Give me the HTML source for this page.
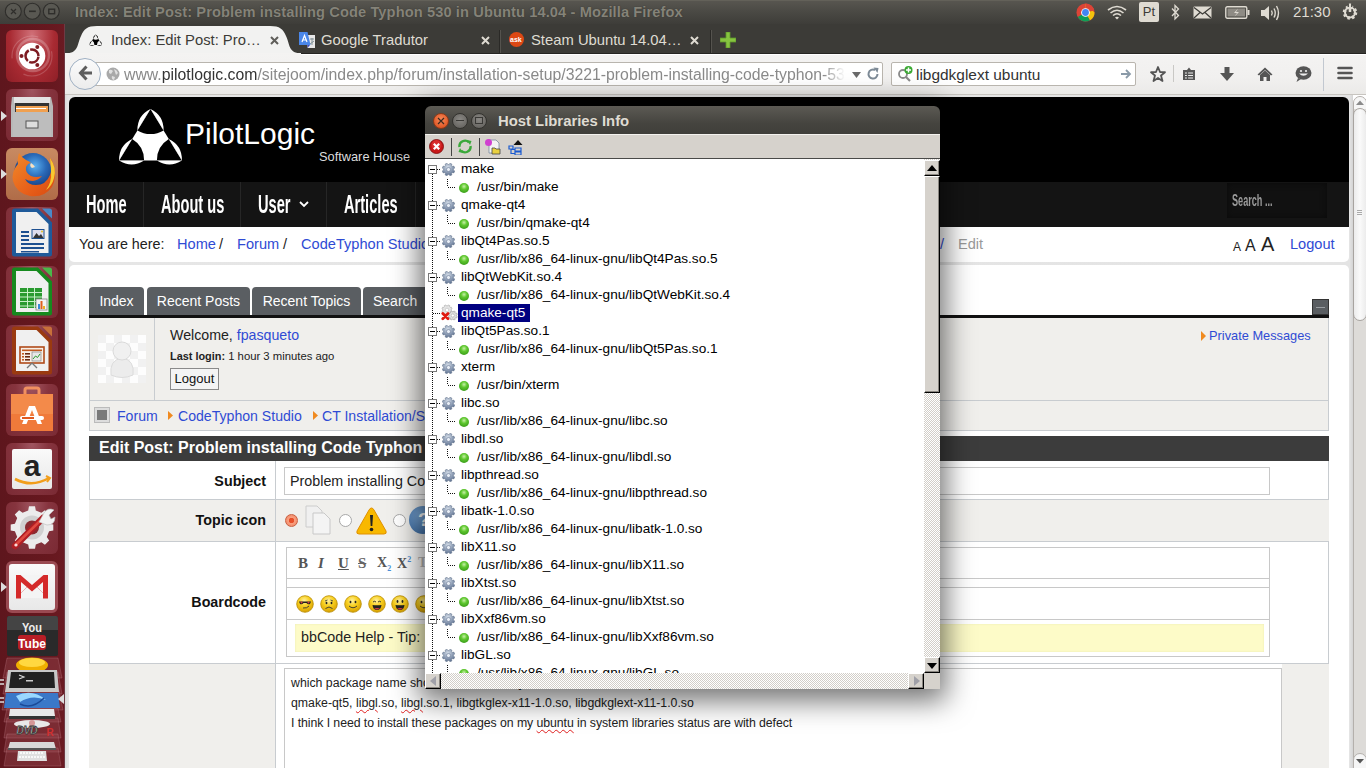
<!DOCTYPE html>
<html><head><meta charset="utf-8">
<style>
*{margin:0;padding:0;box-sizing:border-box}
html,body{width:1366px;height:768px;overflow:hidden;background:#fff;font-family:"Liberation Sans",sans-serif}
.a{position:absolute}
#panel{left:0;top:0;width:1366px;height:24px;background:linear-gradient(#69675e 0,#57554f 1.5px,#4a4944 50%,#3e3d39)}
#title{left:75px;top:4px;font-size:14.65px;font-weight:bold;color:#858379;text-shadow:0 0 1px #2e2d2a;white-space:nowrap;letter-spacing:0.1px}
.wb{width:16px;height:16px;border-radius:50%;border:1px solid #2f2e2b;background:linear-gradient(#5f5d58,#4a4944)}
#launcher{left:0;top:24px;width:65px;height:744px;background:linear-gradient(90deg,#5e161d,#67181f 80%,#6a1a22);border-right:1px solid #6e3a44}
.tile{left:6px;width:52px;height:52px;border-radius:6px}
#tabbar{left:65px;top:24px;width:1301px;height:30px;background:#3c3b37}
#toolbar{left:65px;top:53px;width:1301px;height:42px;background:linear-gradient(#f4f3f2,#f1f0ef 60%,#ebeae8);border-bottom:1px solid #c8c5c0}
#content{left:65px;top:95px;width:1288px;height:673px;background:linear-gradient(90deg,#dadada,#e6e6e6 3px,#e4e4e4)}
.tabt{font-size:14.8px;white-space:nowrap}
.tabx{font-size:11px;line-height:14px}
.url{font-size:15.8px;white-space:nowrap}
.nav{font-size:25px;font-weight:bold;color:#fff;white-space:nowrap;transform:scaleX(0.585);transform-origin:0 0}
.w15{font-size:14.6px;white-space:nowrap}
.ftab{top:287px;height:28px;background:#5a5e62;border-radius:4px 4px 0 0;color:#fff;font-size:14px;line-height:28px;text-align:center;white-space:nowrap}
.lbl{left:89px;width:177px;text-align:right;font-size:14.3px;font-weight:bold;color:#111;white-space:nowrap}
.ta{left:291px;font-size:12.3px;color:#222;white-space:nowrap}
.sp{text-decoration:underline wavy #e02020;text-decoration-thickness:1px;text-underline-offset:2px}
.wbtn{width:16px;height:16px;border-radius:50%;border:1px solid}
.exb{width:9px;height:9px;border:1px solid #7a7a7a;background:#fff}
.exb::after{content:"";position:absolute;left:1px;top:3px;width:5px;height:1px;background:#000}
.tt{font-size:13.62px;color:#000;white-space:nowrap;line-height:16px;margin-top:2.5px}
.ball{width:10px;height:10px;border-radius:50%;background:radial-gradient(circle at 50% 35%,#c8f0a8 0,#60c830 35%,#2a8a10 100%)}
.dith{background:repeating-conic-gradient(#ffffff 0 25%,#d2cec8 0 50%) 0 0/2px 2px}
.sbtn{background:#d6d2cc;border-top:1px solid #fff;border-left:1px solid #fff;border-right:1px solid #000;border-bottom:1px solid #000;box-shadow:inset -1px -1px 0 #8a8680}
</style></head><body>
<div id="panel" class="a">
  <svg class="a" style="left:0;top:0" width="64" height="24">
    <g fill="#595852" stroke="#2f2e2b" stroke-width="1.1">
      <circle cx="13.3" cy="11.2" r="8"/><circle cx="32.3" cy="11.2" r="8"/><circle cx="51.3" cy="11.2" r="8"/>
    </g>
    <path d="M11 9 L16 14 M16 9 L11 14" stroke="#2f2e2b" stroke-width="1.2"/>
    <path d="M29 11.3 H35.8" stroke="#2f2e2b" stroke-width="1.6"/>
    <rect x="48.8" y="9.2" width="5.8" height="4.5" fill="none" stroke="#2f2e2b" stroke-width="1.4"/>
  </svg>
  <div id="title" class="a">Index: Edit Post: Problem installing Code Typhon 530 in Ubuntu 14.04 - Mozilla Firefox</div>
  <svg class="a" style="left:1076px;top:3px" width="19" height="19" viewBox="0 0 20 20"><circle cx="10" cy="10" r="9.5" fill="#db4437"/><path d="M10 10 L1.8 14.8 A9.5 9.5 0 0 0 14.8 18.2 Z" fill="#0f9d58"/><path d="M10 10 L14.8 18.2 A9.5 9.5 0 0 0 19.5 10 L10 1 Z" fill="#f4c20d"/><path d="M10 10 L10 0.5 A9.5 9.5 0 0 1 19.3 8 Z" fill="#db4437"/><circle cx="10" cy="10" r="4.6" fill="#fff"/><circle cx="10" cy="10" r="3.6" fill="#4285f4"/></svg>
  <svg class="a" style="left:1107px;top:5px" width="20" height="15" viewBox="0 0 20 15"><path d="M1 5 Q10 -2 19 5 M3.5 8 Q10 2.5 16.5 8 M6 10.5 Q10 7 14 10.5" fill="none" stroke="#dfdbd2" stroke-width="1.6"/><path d="M8 12.5 L10 14.5 L12 12.5 Q10 11 8 12.5 Z" fill="#dfdbd2"/></svg>
  <div class="a" style="left:1139px;top:2px;width:20px;height:20px;background:#dfdbd2;border-radius:2px;font-size:13px;color:#3c3b37;text-align:center;line-height:20px">Pt</div>
  <svg class="a" style="left:1171px;top:4px" width="9" height="17" viewBox="0 0 9 17"><path d="M1 4.5 L7.5 11.5 L4 15 V1.5 L7.5 5 L1 12" fill="none" stroke="#dfdbd2" stroke-width="1.3"/></svg>
  <svg class="a" style="left:1193px;top:6px" width="19" height="13" viewBox="0 0 19 13"><rect x="0.5" y="0.5" width="18" height="12" fill="#dfdbd2" rx="1"/><path d="M1 1.5 L9.5 8 L18 1.5 M1 12 L7 6.5 M18 12 L12 6.5" fill="none" stroke="#3c3b37" stroke-width="1.2"/></svg>
  <svg class="a" style="left:1225px;top:6px" width="25" height="13" viewBox="0 0 25 13"><rect x="0.8" y="0.8" width="21" height="11.4" rx="1.5" fill="none" stroke="#dfdbd2" stroke-width="1.4"/><rect x="2.5" y="2.5" width="17.6" height="8" fill="#8e8b84"/><rect x="22.5" y="4" width="2" height="5" fill="#dfdbd2"/><path d="M13 2.5 L9 7 L12 7 L9.5 10.5 L14 6 L11 6 Z" fill="#dfdbd2"/></svg>
  <svg class="a" style="left:1260px;top:4px" width="22" height="18" viewBox="0 0 22 18"><path d="M1 6 H4.5 L9 2 V16 L4.5 12 H1 Z" fill="#dfdbd2"/><path d="M11.5 6.5 Q13 9 11.5 11.5 M14 4.5 Q16.5 9 14 13.5 M16.5 2 Q20.5 9 16.5 16" fill="none" stroke="#dfdbd2" stroke-width="1.4"/></svg>
  <div class="a" style="left:1293px;top:3px;font-size:15px;color:#dfdbd2">21:30</div>
  <svg class="a" style="left:1341px;top:3px" width="18" height="18" viewBox="0 0 18 18"><circle cx="9" cy="9.5" r="5.5" fill="none" stroke="#dfdbd2" stroke-width="3.5" stroke-dasharray="2.2 2.1"/><circle cx="9" cy="9.5" r="5" fill="none" stroke="#dfdbd2" stroke-width="2"/><rect x="7.8" y="1" width="2.4" height="8" fill="#dfdbd2"/><rect x="6.6" y="1" width="4.8" height="3" fill="#45443f"/><rect x="7.9" y="0.5" width="2.2" height="8" fill="#dfdbd2"/></svg>
</div>
<div id="launcher" class="a"></div>
<div id="lnch">
<div class="a tile" style="top:30px;background:radial-gradient(ellipse at 50% 10%,#d07078,#a82a32 60%,#8e1f27);"><svg width="52" height="52" viewBox="0 0 52 52"><circle cx="26" cy="26" r="20" fill="none" stroke="rgba(255,255,255,0.18)" stroke-width="1.2" stroke-dasharray="40 20"/><circle cx="27" cy="25" r="16" fill="none" stroke="rgba(255,255,255,0.22)" stroke-width="2.5"/><circle cx="26" cy="26" r="13.3" fill="#fff"/><circle cx="26" cy="26" r="6.5" fill="none" stroke="#7e1c22" stroke-width="2.5" stroke-dasharray="12.1 1.5" stroke-dashoffset="-0.75"/><circle cx="31.3" cy="16.9" r="2" fill="#7e1c22"/><circle cx="31.3" cy="35.1" r="2" fill="#7e1c22"/><circle cx="15.5" cy="26" r="2" fill="#7e1c22"/></svg></div>
<div class="a tile" style="top:89px;background:radial-gradient(ellipse at 50% 0%,#a05560 0%,#86343e 45%,#7a2a34 100%);"><svg width="52" height="52" viewBox="0 0 52 52"><path d="M6 8 H45 L47 17 V48 H5 V17 Z" fill="#b8b8b8"/><rect x="8" y="8" width="36" height="6" fill="#e4e4e4"/><rect x="9" y="14" width="34" height="9" fill="#333"/><rect x="10" y="17" width="32" height="6" fill="#f0a050"/><rect x="10" y="19" width="30" height="1" fill="#fff"/><rect x="7" y="23" width="38" height="25" fill="#bdbdbd"/><rect x="20" y="32" width="12" height="7" fill="#ddd" stroke="#555" stroke-width="1"/></svg></div>
<div class="a tile" style="top:148px;background:linear-gradient(#c88a62,#b06c48)"><svg width="52" height="52" viewBox="0 0 52 52">
<defs><radialGradient id="ffg" cx="0.55" cy="0.35" r="0.6"><stop offset="0" stop-color="#5ab0f0"/><stop offset="0.5" stop-color="#2a6ab8"/><stop offset="1" stop-color="#173c80"/></radialGradient>
<linearGradient id="ffo" x1="0" y1="0" x2="1" y2="1"><stop offset="0" stop-color="#f08a2a"/><stop offset="0.6" stop-color="#e8601a"/><stop offset="1" stop-color="#d84a10"/></linearGradient></defs>
<circle cx="27" cy="23.5" r="18.5" fill="url(#ffg)"/>
<path d="M13 5 Q11 12 12 16 Q5 24 7 33 Q10 45 24 48 Q38 50 46 39 Q51 30 48 18 Q46 12 44 10 Q47 20 44 27 Q40 37 30 37 Q22 37 19 31 Q22 33 27 33 Q33 32 36 28 Q30 30 25 28 Q19 25 20 19 Q22 15 25 15 Q23 13 20 12 Q16 10 13 5 Z" fill="url(#ffo)"/>
<path d="M44 10 Q51 20 48 30 Q46 38 40 42 Q46 34 45 24 Q45 16 44 10 Z" fill="#f8c830"/>
<path d="M25 15 Q28 17 29 19 L26 20 Q23 18 25 15 Z" fill="#f8e0c0"/>
</svg></div>
<div class="a tile" style="top:207px;background:radial-gradient(ellipse at 50% 0%,#a05560 0%,#86343e 45%,#7a2a34 100%);"><svg width="52" height="52" viewBox="0 0 52 52"><path d="M8 1.5 H32 L46 15.5 V47 Q46 49.5 43.5 49.5 H8.5 Q6 49.5 6 47 V4 Q6 1.5 8.5 1.5 Z" fill="#1f5a9a"/><path d="M10 5 H30.5 L42.5 17 V46 H10 Z" fill="#f0f0f0"/><path d="M36 1.5 H43.5 Q46 1.5 46 4 V11.5 Z" fill="#4a8ac8"/><rect x="15" y="24" width="8" height="2" fill="#1e5090"/><rect x="15" y="28" width="8" height="2" fill="#1e5090"/><rect x="15" y="32" width="8" height="2" fill="#1e5090"/><rect x="15" y="36" width="23" height="2" fill="#1e5090"/><rect x="15" y="40" width="23" height="2" fill="#1e5090"/><rect x="15" y="44" width="18" height="1.5" fill="#1e5090"/><rect x="25.5" y="22" width="13" height="10" fill="#1e5090"/><rect x="26.5" y="23" width="11" height="8" fill="#dde"/><path d="M27 31 L30.5 26 L33 29 L35 27 L37.5 31 Z" fill="#333"/><circle cx="36" cy="24.5" r="1" fill="#e8c020"/></svg></div>
<div class="a tile" style="top:266px;background:radial-gradient(ellipse at 50% 0%,#a05560 0%,#86343e 45%,#7a2a34 100%);"><svg width="52" height="52" viewBox="0 0 52 52"><path d="M8 1.5 H32 L46 15.5 V47 Q46 49.5 43.5 49.5 H8.5 Q6 49.5 6 47 V4 Q6 1.5 8.5 1.5 Z" fill="#168a1e"/><path d="M10 5 H30.5 L42.5 17 V46 H10 Z" fill="#f0f0f0"/><path d="M36 1.5 H43.5 Q46 1.5 46 4 V11.5 Z" fill="#4ab84a"/><rect x="14" y="22" width="22" height="20" fill="#2a9a30"/><path d="M14 26.5 H36 M14 31 H36 M14 35.5 H36 M14 40 H36 M21.5 22 V42 M28.5 22 V42" stroke="#c8f0c8" stroke-width="1"/><rect x="30" y="33" width="11" height="11" fill="#f4f4f4" stroke="#888" stroke-width="0.8"/><rect x="32" y="38" width="2" height="5" fill="#3a8ad8"/><rect x="34.5" y="35" width="2" height="8" fill="#e06020"/><rect x="37" y="40" width="2" height="3" fill="#f0b020"/></svg></div>
<div class="a tile" style="top:325px;background:radial-gradient(ellipse at 50% 0%,#a05560 0%,#86343e 45%,#7a2a34 100%);"><svg width="52" height="52" viewBox="0 0 52 52"><path d="M8 1.5 H32 L46 15.5 V47 Q46 49.5 43.5 49.5 H8.5 Q6 49.5 6 47 V4 Q6 1.5 8.5 1.5 Z" fill="#9a3a10"/><path d="M10 5 H30.5 L42.5 17 V46 H10 Z" fill="#f0f0f0"/><path d="M36 1.5 H43.5 Q46 1.5 46 4 V11.5 Z" fill="#c8703a"/><rect x="14" y="22" width="24" height="16" fill="#f8f0e8" stroke="#b04a1a" stroke-width="1.6"/><rect x="16" y="24.5" width="20" height="1.6" fill="#c05a20"/><rect x="16" y="28" width="2" height="1.6" fill="#c05a20"/><rect x="19" y="28" width="5" height="1.6" fill="#6a2a10"/><rect x="16" y="31" width="2" height="1.6" fill="#c05a20"/><rect x="19" y="31" width="5" height="1.6" fill="#6a2a10"/><rect x="16" y="34" width="2" height="1.6" fill="#c05a20"/><rect x="19" y="34" width="5" height="1.6" fill="#6a2a10"/><rect x="26" y="27" width="9" height="9" fill="#e8e8e8" stroke="#777" stroke-width="0.6"/><path d="M27 34 L29.5 31 L31.5 32.5 L34 29" fill="none" stroke="#2a9a2a" stroke-width="1"/><path d="M26 38 L21 43 M26 38 L31 43" stroke="#777" stroke-width="1.4"/></svg></div>
<div class="a tile" style="top:384px;background:radial-gradient(ellipse at 50% 0%,#a05560 0%,#86343e 45%,#7a2a34 100%)"><svg width="52" height="52" viewBox="0 0 52 52"><path d="M19 10 V6 Q19 4 21 4 H31 Q33 4 33 6 V10" fill="none" stroke="#f09060" stroke-width="3"/><path d="M5 10 H47 V47 H5 Z" fill="#f07a3a"/><path d="M5 10 H47 V30 H5 Z" fill="#f38a4a"/><path d="M23 22 H29 L36 40 H31.5 L26 26 L20.5 40 H16 Z" fill="#fff"/><rect x="14" y="32" width="24" height="4" rx="2" fill="#fff"/><rect x="16" y="33" width="12" height="2" fill="#e05a20"/></svg></div>
<div class="a tile" style="top:443px;background:radial-gradient(ellipse at 50% 0%,#a05560 0%,#86343e 45%,#7a2a34 100%)"><div class="a" style="left:6px;top:6px;width:40px;height:40px;border-radius:2px;background:linear-gradient(#fafafa,#e8e8e8)"></div><svg class="a" style="left:0;top:0" width="52" height="52" viewBox="0 0 52 52"><text x="26" y="33" text-anchor="middle" font-family="Liberation Sans" font-weight="bold" font-size="30" fill="#222">a</text><path d="M9 36 Q26 45 43 35" fill="none" stroke="#f19e1c" stroke-width="2.6"/><path d="M40 33 L44 35 L41 39" fill="none" stroke="#f19e1c" stroke-width="2"/></svg></div>
<div class="a tile" style="top:502px;background:radial-gradient(ellipse at 50% 0%,#a05560 0%,#86343e 45%,#7a2a34 100%)"><svg width="52" height="52" viewBox="0 0 52 52"><path d="M43.1 21.7 L47.3 22.5 L47.3 28.5 L43.1 29.3 L40.8 34.9 L43.2 38.4 L38.9 42.7 L35.4 40.3 L29.8 42.6 L29.0 46.8 L23.0 46.8 L22.2 42.6 L16.6 40.3 L13.1 42.7 L8.8 38.4 L11.2 34.9 L8.9 29.3 L4.7 28.5 L4.7 22.5 L8.9 21.7 L11.2 16.1 L8.8 12.6 L13.1 8.3 L16.6 10.7 L22.2 8.4 L23.0 4.2 L29.0 4.2 L29.8 8.4 L35.4 10.7 L38.9 8.3 L43.2 12.6 L40.8 16.1 Z" fill="#ececec"/><circle cx="26" cy="25.5" r="12" fill="#d0d0d0"/><circle cx="26" cy="25.5" r="7" fill="#8a2a30"/><path d="M9 44 L37 16" stroke="#b01e24" stroke-width="6.5" stroke-linecap="round"/><path d="M9.5 43 L36 17" stroke="#e04a40" stroke-width="2.5" stroke-linecap="round"/><circle cx="10" cy="43" r="1.6" fill="#fff" opacity="0.8"/><path d="M33 20 L38 11 Q42 5 48 8 L43 13 L45 17 L49 15 Q49 23 41 23 Z" fill="#f2f2f2" stroke="#bbb" stroke-width="0.6"/></svg></div>
<div class="a tile" style="top:561px;background:linear-gradient(#fafafa,#e8e8e8);border:3px solid #9a4a52"><svg class="a" style="left:-3px;top:-3px" width="52" height="52" viewBox="0 0 52 52"><path d="M10 14 H42 V37 H10 Z" fill="#f4f4f4"/><path d="M10 37 L21 26 M42 37 L31 26" stroke="#e8a0a0" stroke-width="0.8"/><path d="M10 14 H14.5 L26 24 L37.5 14 H42 V37.5 H37 V21 L26 30.5 L15 21 V37.5 H10 Z" fill="#d42a2a"/></svg></div>
<div class="a" style="left:1px;top:111px;width:0;height:0;border-top:5px solid transparent;border-bottom:5px solid transparent;border-left:6px solid #ddd"></div>
<div class="a" style="left:1px;top:169px;width:0;height:0;border-top:5px solid transparent;border-bottom:5px solid transparent;border-left:6px solid #ddd"></div>
<div class="a" style="left:1px;top:582px;width:0;height:0;border-top:5px solid transparent;border-bottom:5px solid transparent;border-left:6px solid #ddd"></div>
<svg class="a" style="left:0;top:610px" width="65" height="158" viewBox="0 0 65 158">
 <g fill="rgba(160,80,90,0.35)" stroke="rgba(200,140,150,0.35)" stroke-width="0.8">
  <path d="M7 48 H58 L62 68 H3 Z"/><path d="M7 62 H58 L62 84 H3 Z"/><path d="M6 80 H59 L63 100 H2 Z"/>
  <path d="M7 98 H58 L61 112 H4 Z"/><path d="M7 108 H58 L61 128 H4 Z"/><path d="M7 124 H58 L61 142 H4 Z"/><path d="M7 138 H58 L61 156 H4 Z"/>
 </g>
 <path d="M9 6 H56 Q58 6 58 9 V44 Q58 46 55 46 H10 Q7 46 7 44 V9 Q7 6 9 6 Z" fill="#2a2a2a"/>
 <path d="M9 6 H56 Q58 6 58 9 V20 H7 V9 Q7 6 9 6 Z" fill="#444"/>
 <text x="32" y="22" text-anchor="middle" font-family="Liberation Sans" font-weight="bold" font-size="11" fill="#eee" transform="scale(1,1.15) translate(0,-2.5)">You</text>
 <rect x="18" y="25" width="28" height="15" rx="3" fill="#b81e26"/><text x="32" y="37.5" text-anchor="middle" font-family="Liberation Sans" font-weight="bold" font-size="12" fill="#fff">Tube</text>
 <ellipse cx="32" cy="55" rx="16" ry="7.5" fill="#f0b000"/><ellipse cx="32" cy="52.5" rx="13" ry="4.5" fill="#ffd840"/>
 <path d="M8 60 H57 L59 82 H5 Z" fill="#c8c8c8"/><path d="M11 62 H54 L55 78 H9 Z" fill="#222"/><path d="M19 65 L24 67 L19 69" stroke="#ddd" fill="none" stroke-width="1.1"/><rect x="26" y="70" width="7" height="1.5" fill="#ccc"/>
 <path d="M6 83 H58 L60 98 H4 Z" fill="#3a78c8"/><path d="M16 86 Q32 78 46 90 Q32 84 20 92 Z" fill="#9ad8ff"/><path d="M20 94 Q32 100 44 88" fill="none" stroke="#1a4a98" stroke-width="1.5"/>
 <path d="M10 99 H54 L55 106 H9 Z" fill="#e8e8e8"/><rect x="9" y="106" width="46" height="3" fill="#333"/>
 <ellipse cx="32" cy="114" rx="18" ry="4" fill="#e8e8e8"/><circle cx="32" cy="113" r="3" fill="#c86060" opacity="0.6"/>
 <text x="27" y="124" text-anchor="middle" font-family="Liberation Sans" font-style="italic" font-weight="bold" font-size="10" fill="#fff" stroke="#333" stroke-width="0.8">DVD</text><text x="50" y="126" text-anchor="middle" font-family="Liberation Sans" font-weight="bold" font-size="10" fill="#d03030">R</text>
 <path d="M10 132 H54 L56 139 H8 Z" fill="#d8d8d8"/><rect x="8" y="138" width="48" height="2" fill="#555"/>
 <path d="M18 141 H46 L47 151 H17 Z" fill="#e0e0e0"/><path d="M20 143 H44 M19 147 H45" stroke="#fff" stroke-width="1.5" stroke-dasharray="2 1"/>
 <path d="M0 70 H4 M0 74 H4 M0 88 H4 M0 92 H4" stroke="#ddd" stroke-width="1.6"/>
 <path d="M64 84 L58 89 L64 94 Z" fill="#ddd"/>
</svg>
</div>
<div id="tabbar" class="a">
  <svg class="a" style="left:0;top:0" width="1301" height="30">
    <path d="M0 29.5 C 14 29.5, 12 20, 16 12 C 19 5, 22 2, 32 2 L 205 2 C 215 2, 218 5, 221 12 C 225 20, 223 29.5, 237 29.5 Z" fill="#f2f2f1"/>
    <line x1="434.5" y1="6" x2="434.5" y2="29" stroke="#2a2926" stroke-width="1"/>
    <line x1="435.5" y1="6" x2="435.5" y2="29" stroke="#55534e" stroke-width="1"/>
    <line x1="645.5" y1="6" x2="645.5" y2="29" stroke="#2a2926" stroke-width="1"/>
    <line x1="646.5" y1="6" x2="646.5" y2="29" stroke="#55534e" stroke-width="1"/>
  </svg>
</div>
<div id="tabs">
  <svg class="a" style="left:88px;top:33px" width="16" height="14" viewBox="0 0 80 68"><path d="M38.5 7.1 L7.1 58.4 L69.9 58.4 Z" fill="#000"/><path d="M38.5 7.1 L25.4 28.4 A25 25 0 0 0 51.6 28.4 Z M7.1 58.4 L20.2 37.1 A25 25 0 0 1 32.1 58.4 Z M69.9 58.4 L56.8 37.1 A25 25 0 0 0 44.9 58.4 Z" fill="#f2f2f1"/><path d="M38.5 7.1 Q25.2 13.6 25.4 28.4 Z M38.5 7.1 Q51.8 13.6 51.6 28.4 Z M7.1 58.4 Q6.8 43.6 20.2 37.1 Z M7.1 58.4 Q19.6 66.4 32.1 58.4 Z M69.9 58.4 Q70.2 43.6 56.8 37.1 Z M69.9 58.4 Q57.4 66.4 44.9 58.4 Z" fill="#000"/></svg>
  <div class="a tabt" style="left:111px;top:32px;color:#3c3b37">Index: Edit Post: Pro…</div>
  <svg class="a" style="left:270px;top:36px" width="9" height="9"><path d="M1 1 L8 8 M8 1 L1 8" stroke="#5f5e5a" stroke-width="2"/></svg>
  <svg class="a" style="left:298px;top:32px" width="18" height="17" viewBox="0 0 18 17"><rect x="9.5" y="3" width="7.5" height="13" fill="#e8e8e8"/><path d="M12 7 H16 M14 6 V13 M12 12 L16 9" stroke="#7a8a90" stroke-width="0.9"/><path d="M9.5 13 H12 L9.5 16 Z" fill="#3a4ac0"/><path d="M1 0 H9.5 L12.5 13 H1 Z" fill="#4a86e8"/><path d="M4 10 L6.5 3.5 L9 10 M5 8 H8" fill="none" stroke="#fff" stroke-width="1.2"/></svg>
  <div class="a tabt" style="left:321px;top:32px;color:#dfdbd2">Google Tradutor</div>
  <svg class="a" style="left:481px;top:36px" width="9" height="9"><path d="M1 1 L8 8 M8 1 L1 8" stroke="#dfdbd2" stroke-width="2"/></svg>
  <div class="a" style="left:509px;top:32px;width:15px;height:15px;background:#dd4814;border-radius:50%"></div>
  <div class="a" style="left:510px;top:36px;font-size:7px;color:#fff;font-weight:bold">ask</div>
  <div class="a tabt" style="left:531px;top:32px;color:#dfdbd2">Steam Ubuntu 14.04…</div>
  <svg class="a" style="left:690px;top:36px" width="9" height="9"><path d="M1 1 L8 8 M8 1 L1 8" stroke="#dfdbd2" stroke-width="2"/></svg>
  <svg class="a" style="left:720px;top:32px" width="16" height="16"><path d="M6 0 H10 V6 H16 V10 H10 V16 H6 V10 H0 V6 H6 Z" fill="#86c440" stroke="#5e9a2a" stroke-width="0.8"/></svg>
</div>
<div id="toolbar" class="a"></div>
<div id="tb">
  <div class="a" style="left:301px;top:53px;width:1065px;height:1px;background:#262522"></div>
  <div class="a" style="left:301px;top:54px;width:1065px;height:1px;background:#fff"></div>
  <div class="a" style="left:90px;top:62px;width:793px;height:24px;background:#fff;border:1px solid #b9b5ae;border-radius:2px"></div>
  <div class="a" style="left:69px;top:58px;width:32px;height:32px;border-radius:50%;border:1px solid #9fb0c3;background:linear-gradient(#fbfbfb,#ececec)"></div>
  <svg class="a" style="left:78px;top:65px" width="16" height="16" viewBox="0 0 16 16"><path d="M8.5 1.5 L2.5 8 L8.5 14.5 M3 8 H14" fill="none" stroke="#5d5d5d" stroke-width="3" stroke-linejoin="miter"/></svg>
  <svg class="a" style="left:106px;top:67px" width="14" height="14" viewBox="0 0 14 14"><circle cx="7" cy="7" r="6.5" fill="#a9a9a9"/><path d="M3 3 Q5 2 7 4 L5 7 L3 6 Z M8 2 Q11 3 12 6 L10 8 L9 5 Z M6 9 L9 10 L8 13 Q5 12 6 9 Z" fill="#e0e0e0"/></svg>
  <div class="a url" style="left:124px;top:66px;width:721px;overflow:hidden;-webkit-mask-image:linear-gradient(90deg,#000 97%,transparent)"><span style="color:#8a8a8a">www.</span><span style="color:#333">pilotlogic.com</span><span style="color:#8a8a8a">/sitejoom/index.php/forum/installation-setup/3221-problem-installing-code-typhon-53(</span></div>
  <svg class="a" style="left:852px;top:72px" width="9" height="6"><path d="M0 0 H9 L4.5 6 Z" fill="#6a6a6a"/></svg>
  <svg class="a" style="left:866px;top:67px" width="14" height="14" viewBox="0 0 14 14"><path d="M11.5 7 A4.5 4.5 0 1 1 9 3" fill="none" stroke="#7d8a96" stroke-width="2"/><path d="M7.5 0.5 L12.5 1 L11.5 6 Z" fill="#7d8a96"/></svg>
  <div class="a" style="left:891px;top:62px;width:245px;height:24px;background:#fff;border:1px solid #b9b5ae;border-radius:2px"></div>
  <svg class="a" style="left:897px;top:65px" width="18" height="18" viewBox="0 0 18 18"><circle cx="6" cy="9" r="4" fill="none" stroke="#8a8a8a" stroke-width="1.8"/><path d="M9 12 L13 16" stroke="#8a8a8a" stroke-width="2.2"/><circle cx="11.5" cy="5" r="4" fill="#3aa832"/><path d="M11.5 2.5 V7.5 M9 5 H14" stroke="#fff" stroke-width="1.5"/></svg>
  <div class="a url" style="left:916px;top:66px;color:#333;font-size:15.45px">libgdkglext ubuntu</div>
  <svg class="a" style="left:1120px;top:68px" width="12" height="12" viewBox="0 0 12 12"><path d="M1 6 H10 M6 2 L10 6 L6 10" fill="none" stroke="#8a9aa8" stroke-width="1.8"/></svg>
  <svg class="a" style="left:1150px;top:66px" width="16" height="16" viewBox="0 0 16 16"><path d="M8 1 L10 6 L15 6.2 L11 9.5 L12.5 15 L8 12 L3.5 15 L5 9.5 L1 6.2 L6 6 Z" fill="none" stroke="#555" stroke-width="1.8" stroke-linejoin="round"/></svg>
  <div class="a" style="left:1173px;top:65px;width:1px;height:17px;background:#c9c8c5"></div>
  <svg class="a" style="left:1182px;top:66px" width="14" height="15" viewBox="0 0 14 15"><path d="M1 4 H5 L7 1.5 L9 4 H13 V14 H1 Z" fill="#555"/><path d="M3 7 H11 M3 9.5 H11 M3 12 H11" stroke="#eee" stroke-width="1.2"/><path d="M5.5 6 V13" stroke="#555" stroke-width="1.2"/></svg>
  <svg class="a" style="left:1220px;top:67px" width="14" height="14" viewBox="0 0 14 14"><path d="M4.5 0 H9.5 V6 H14 L7 14 L0 6 H4.5 Z" fill="#555"/></svg>
  <svg class="a" style="left:1257px;top:67px" width="16" height="14" viewBox="0 0 16 14"><path d="M8 0.5 L15.5 7.5 L14 8.5 L8 3 L2 8.5 L0.5 7.5 Z M3 8 L8 3.5 L13 8 V14 H9.5 V10 H6.5 V14 H3 Z" fill="#555"/></svg>
  <svg class="a" style="left:1295px;top:66px" width="17" height="16" viewBox="0 0 17 16"><ellipse cx="8.5" cy="7" rx="8" ry="6.8" fill="#555"/><path d="M3 12 L1.5 16 L6 13 Z" fill="#555"/><circle cx="6" cy="5" r="1.1" fill="#eee"/><circle cx="11" cy="5" r="1.1" fill="#eee"/><path d="M4 7.5 Q8.5 12 13 7.5 Z" fill="#eee"/></svg>
  <div class="a" style="left:1323px;top:58px;width:1px;height:33px;background:#c2c8d0"></div>
  <svg class="a" style="left:1337px;top:66px" width="16" height="14" viewBox="0 0 16 14"><path d="M1.5 2 H14.5 M1.5 7 H14.5 M1.5 12 H14.5" stroke="#555" stroke-width="2.6" stroke-linecap="round"/></svg>
</div>
<div id="content" class="a"></div>
<div id="web">
  <div class="a" style="left:69px;top:97px;width:1280px;height:85px;background:#000;border-radius:6px 6px 0 0"></div>
  <svg class="a" style="left:112px;top:102px" width="80" height="68" viewBox="0 0 80 68"><path d="M38.5 7.1 L7.1 58.4 L69.9 58.4 Z" fill="#fff"/><path d="M38.5 7.1 L25.4 28.4 A25 25 0 0 0 51.6 28.4 Z M7.1 58.4 L20.2 37.1 A25 25 0 0 1 32.1 58.4 Z M69.9 58.4 L56.8 37.1 A25 25 0 0 0 44.9 58.4 Z" fill="#000"/><path d="M38.5 7.1 Q25.2 13.6 25.4 28.4 Z M38.5 7.1 Q51.8 13.6 51.6 28.4 Z M7.1 58.4 Q6.8 43.6 20.2 37.1 Z M7.1 58.4 Q19.6 66.4 32.1 58.4 Z M69.9 58.4 Q70.2 43.6 56.8 37.1 Z M69.9 58.4 Q57.4 66.4 44.9 58.4 Z" fill="#fff"/></svg>
  <div class="a" style="left:185px;top:117px;font-size:30px;color:#fff;white-space:nowrap">PilotLogic</div>
  <div class="a" style="left:319px;top:149px;font-size:12.8px;color:#ddd;white-space:nowrap">Software House</div>
  <div class="a" style="left:69px;top:182px;width:1280px;height:45px;background:#141414"></div>
  <div class="a" style="left:143px;top:182px;width:1px;height:45px;background:#262626"></div>
  <div class="a" style="left:240px;top:182px;width:1px;height:45px;background:#262626"></div>
  <div class="a" style="left:326px;top:182px;width:1px;height:45px;background:#262626"></div>
  <div class="a" style="left:415px;top:182px;width:1px;height:45px;background:#262626"></div>
  <div class="a nav" style="left:86px;top:190px">Home</div>
  <div class="a nav" style="left:161px;top:190px">About us</div>
  <div class="a nav" style="left:258px;top:190px">User</div>
  <svg class="a" style="left:299px;top:201px" width="10" height="7"><path d="M1 1 L5 5 L9 1" fill="none" stroke="#fff" stroke-width="1.8"/></svg>
  <div class="a nav" style="left:344px;top:190px">Articles</div>
  <div class="a" style="left:1227px;top:183px;width:100px;height:35px;background:#111;box-shadow:inset 0 0 6px #0a0a0a"></div>
  <div class="a nav" style="left:1232px;top:192px;font-size:15.6px;color:#9a9a9a">Search ...</div>
  <div class="a" style="left:69px;top:227px;width:1280px;height:35px;background:#fff;border-radius:0 0 5px 5px"></div>
  <div class="a w15" style="left:79px;top:236px;color:#222;font-size:14.33px">You are here:</div>
  <div class="a w15" style="left:177px;top:236px;color:#2f4bd4">Home</div><div class="a w15" style="left:219px;top:236px;color:#222">/</div>
  <div class="a w15" style="left:237px;top:236px;color:#2f4bd4">Forum</div><div class="a w15" style="left:283px;top:236px;color:#222">/</div>
  <div class="a w15" style="left:301px;top:236px;color:#2f4bd4">CodeTyphon Studio</div>
  <div class="a w15" style="left:940px;top:236px;color:#2f4bd4">/</div>
  <div class="a w15" style="left:958px;top:236px;color:#999">Edit</div>
  <div class="a" style="left:1233px;top:240px;font-size:12px;color:#222">A</div>
  <div class="a" style="left:1245px;top:237px;font-size:16px;color:#222">A</div>
  <div class="a" style="left:1261px;top:233px;font-size:20px;color:#222">A</div>
  <div class="a w15" style="left:1290px;top:236px;color:#2f4bd4">Logout</div>
  <div class="a" style="left:69px;top:265px;width:1280px;height:503px;background:#fff;border-radius:5px 5px 0 0"></div>
  <!-- forum tabs -->
  <div class="a ftab" style="left:89px;width:55px">Index</div>
  <div class="a ftab" style="left:147px;width:103px">Recent Posts</div>
  <div class="a ftab" style="left:252px;width:109px">Recent Topics</div>
  <div class="a ftab" style="left:363px;width:90px;text-align:left;padding-left:10px">Search</div>
  <div class="a" style="left:89px;top:315px;width:1240px;height:3px;background:#111"></div>
  <div class="a" style="left:1312px;top:299px;width:17px;height:16px;background:#5a5e62;border:1px solid #333"></div>
  <div class="a" style="left:1316px;top:307px;width:9px;height:1px;background:#9a9ea2"></div>
  <!-- user box -->
  <div class="a" style="left:89px;top:318px;width:1240px;height:83px;background:#f0efec;border:1px solid #c8ccd0;border-top:none"></div>
  <div class="a" style="left:154px;top:318px;width:1px;height:83px;background:#c8ccd0"></div>
  <div class="a" style="left:98px;top:335px;width:48px;height:48px;background:repeating-conic-gradient(#fdfdfd 0 25%,#f1f1f1 0 50%) 0 0/16px 16px"></div>
  <svg class="a" style="left:108px;top:340px" width="28" height="40" viewBox="0 0 28 40"><path d="M3 35 Q1 20 14 18 Q27 20 25 35 Q14 40 3 35 Z" fill="#ececec" stroke="#dcdcdc"/><circle cx="14" cy="11" r="9" fill="#f0f0f0" stroke="#dadada"/></svg>
  <div class="a w15" style="left:170px;top:327px;color:#222;font-size:14.2px">Welcome, <span style="color:#2f4bd4">fpasqueto</span></div>
  <div class="a" style="left:170px;top:350px;font-size:11.3px;color:#222;white-space:nowrap"><b style="font-size:10.9px">Last login:</b> 1 hour 3 minutes ago</div>
  <div class="a" style="left:170px;top:368px;width:49px;height:22px;border:1px solid #8a8a8a;background:#f4f4f4;font-size:13px;line-height:20px;text-align:center;color:#111">Logout</div>
  <svg class="a" style="left:1201px;top:331px" width="5" height="10"><path d="M0 0 L5 5 L0 10 Z" fill="#f08a20"/></svg>
  <div class="a" style="left:1209px;top:328px;font-size:12.8px;color:#2f4bd4;white-space:nowrap">Private Messages</div>
  <!-- forum breadcrumb -->
  <div class="a" style="left:89px;top:401px;width:1240px;height:30px;background:#f0efec;border:1px solid #c8ccd0;border-top:none"></div>
  <div class="a" style="left:95px;top:408px;width:14px;height:14px;background:#7a7a7a;border:2px solid #ddd;outline:1px solid #bbb"></div>
  <div class="a w15" style="left:117px;top:408px;color:#2f4bd4;font-size:14.1px">Forum</div>
  <svg class="a" style="left:168px;top:411px" width="5" height="9"><path d="M0 0 L5 4.5 L0 9 Z" fill="#f08a20"/></svg>
  <div class="a w15" style="left:178px;top:408px;color:#2f4bd4;font-size:14.1px">CodeTyphon Studio</div>
  <svg class="a" style="left:313px;top:411px" width="5" height="9"><path d="M0 0 L5 4.5 L0 9 Z" fill="#f08a20"/></svg>
  <div class="a w15" style="left:322px;top:408px;color:#2f4bd4;font-size:14.1px">CT Installation/Setup</div>
  <!-- edit post bar -->
  <div class="a" style="left:89px;top:436px;width:1240px;height:25px;background:#3c3c3c"></div>
  <div class="a" style="left:99px;top:439px;font-size:16px;font-weight:bold;color:#fff;white-space:nowrap">Edit Post: Problem installing Code Typhon 530 in Ubuntu 14.04</div>
  <!-- form table -->
  <div class="a" style="left:89px;top:461px;width:1240px;height:307px;border-left:1px solid #c8ccd0;border-right:1px solid #c8ccd0"></div>
  <div class="a" style="left:89px;top:499px;width:1240px;height:42px;background:#f0efec"></div>
  <div class="a" style="left:89px;top:663px;width:187px;height:105px;background:#f0efec"></div>
  <div class="a" style="left:1282px;top:663px;width:47px;height:105px;background:#f0efec"></div>
  <div class="a" style="left:89px;top:499px;width:1240px;height:1px;background:#c8ccd0"></div>
  <div class="a" style="left:89px;top:541px;width:1240px;height:1px;background:#c8ccd0"></div>
  <div class="a" style="left:89px;top:663px;width:1240px;height:1px;background:#c8ccd0"></div>
  <div class="a" style="left:275px;top:461px;width:1px;height:307px;background:#c8ccd0"></div>
  <div class="a lbl" style="top:473px">Subject</div>
  <div class="a lbl" style="top:512px">Topic icon</div>
  <div class="a lbl" style="top:594px">Boardcode</div>
  <div class="a" style="left:284px;top:467px;width:986px;height:28px;border:1px solid #c8c8c8;background:#fff"></div>
  <div class="a w15" style="left:290px;top:473px;color:#222;font-size:14.3px">Problem installing Code Typhon 530 in Ubuntu 14.04</div>
  <div class="a" style="left:285px;top:514px;width:13px;height:13px;border-radius:50%;background:radial-gradient(circle,#e8502a 0 2.5px,#f8a080 3px,#f08060 100%);border:1px solid #c86040"></div>
  <svg class="a" style="left:305px;top:505px" width="26" height="30" viewBox="0 0 26 30"><path d="M1 1 H12 L17 6 V22 H1 Z" fill="#f0f0f0" stroke="#ccc"/><path d="M8 8 H19 L25 14 V29 H8 Z" fill="#f4f4f4" stroke="#c8c8c8"/></svg>
  <div class="a" style="left:339px;top:514px;width:13px;height:13px;border-radius:50%;background:#fff;border:1px solid #a8a8a8"></div>
  <svg class="a" style="left:356px;top:507px" width="31" height="28" viewBox="0 0 31 28"><path d="M15.5 1 Q17 1 18 3 L30 24 Q31 27 28 27 H3 Q0 27 1 24 L13 3 Q14 1 15.5 1 Z" fill="#f8b800" stroke="#e09000"/><path d="M14 8 H17 L16.3 19 H14.7 Z" fill="#222"/><circle cx="15.5" cy="22.5" r="1.8" fill="#222"/></svg>
  <div class="a" style="left:393px;top:514px;width:13px;height:13px;border-radius:50%;background:#fff;border:1px solid #a8a8a8"></div>
  <div class="a" style="left:409px;top:506px;width:28px;height:28px;border-radius:50%;background:radial-gradient(circle at 40% 30%,#7aa8d8,#4a7ab0 70%,#3a6aa0)"></div><div class="a" style="left:418px;top:509px;font-size:19px;font-weight:bold;color:#fff">?</div>
  <!-- editor -->
  <div class="a" style="left:286px;top:547px;width:984px;height:110px;border:1px solid #c8c8c8;background:#fff"></div>
  <div class="a" style="left:286px;top:578px;width:984px;height:1px;background:#c8c8c8"></div>
  <div class="a" style="left:286px;top:587px;width:984px;height:1px;background:#c8c8c8"></div>
  <div class="a" style="left:286px;top:619px;width:984px;height:1px;background:#c8c8c8"></div>
  <div class="a" style="left:295px;top:624px;width:969px;height:28px;background:#fdfbc8;box-shadow:inset 0 0 2px #e8e6b0"></div>
  <div class="a w15" style="left:301px;top:629px;color:#222;font-size:14.3px">bbCode Help - Tip: </div>
  <div class="a" style="left:298px;top:555px;font-family:'Liberation Serif',serif;font-size:15px;font-weight:bold;color:#555;white-space:nowrap">B</div>
  <div class="a" style="left:318px;top:555px;font-family:'Liberation Serif',serif;font-size:15px;font-style:italic;font-weight:bold;color:#555">I</div>
  <div class="a" style="left:338px;top:555px;font-family:'Liberation Serif',serif;font-size:15px;font-weight:bold;color:#555;text-decoration:underline">U</div>
  <div class="a" style="left:358px;top:555px;font-family:'Liberation Serif',serif;font-size:15px;font-weight:bold;color:#666;text-decoration:line-through">S</div>
  <div class="a" style="left:377px;top:555px;font-family:'Liberation Serif',serif;font-size:14px;font-weight:bold;color:#555">X<sub style="font-size:8px;color:#4a90d8">2</sub></div>
  <div class="a" style="left:397px;top:555px;font-family:'Liberation Serif',serif;font-size:14px;font-weight:bold;color:#555">X<sup style="font-size:8px;color:#4a90d8">2</sup></div>
  <div class="a" style="left:418px;top:555px;font-family:'Liberation Serif',serif;font-size:14px;font-weight:bold;color:#bbb">T</div>
  
  <svg width="0" height="0" style="position:absolute"><defs><radialGradient id="smg" cx="0.45" cy="0.3" r="0.7"><stop offset="0" stop-color="#fff0a0"/><stop offset="0.45" stop-color="#f8d020"/><stop offset="1" stop-color="#d8a000"/></radialGradient></defs></svg><svg class="a" style="left:296px;top:595px" width="18" height="18" viewBox="0 0 18 18"><circle cx="9" cy="9" r="8.3" fill="url(#smg)" stroke="#b88a00" stroke-width="0.8"/><path d="M3 6.5 H15 L14 9 Q12 10 10.5 8 H7.5 Q6 10 4 9 Z" fill="#222"/><circle cx="5.5" cy="7.5" r="1" fill="#e04040"/><circle cx="12.5" cy="7.5" r="1" fill="#e04040"/><path d="M7 13 Q11 13.5 13 11" fill="none" stroke="#333" stroke-width="0.9"/></svg><svg class="a" style="left:320px;top:595px" width="18" height="18" viewBox="0 0 18 18"><circle cx="9" cy="9" r="8.3" fill="url(#smg)" stroke="#b88a00" stroke-width="0.8"/><path d="M5 6 L7.5 5 M13 6 L10.5 5" stroke="#333" stroke-width="0.8"/><ellipse cx="6.5" cy="8" rx="0.9" ry="1.3" fill="#222"/><ellipse cx="11.5" cy="8" rx="0.9" ry="1.3" fill="#222"/><path d="M5.5 13.5 Q9 10.5 12.5 13.5" fill="none" stroke="#333" stroke-width="0.9"/></svg><svg class="a" style="left:344px;top:595px" width="18" height="18" viewBox="0 0 18 18"><circle cx="9" cy="9" r="8.3" fill="url(#smg)" stroke="#b88a00" stroke-width="0.8"/><ellipse cx="6.5" cy="7" rx="0.9" ry="1.3" fill="#222"/><ellipse cx="11.5" cy="7" rx="0.9" ry="1.3" fill="#222"/><path d="M5 11 Q9 14.5 13 11" fill="none" stroke="#333" stroke-width="0.9"/></svg><svg class="a" style="left:368px;top:595px" width="18" height="18" viewBox="0 0 18 18"><circle cx="9" cy="9" r="8.3" fill="url(#smg)" stroke="#b88a00" stroke-width="0.8"/><path d="M5 7 Q6.5 5.5 8 7 M10 7 Q11.5 5.5 13 7" fill="none" stroke="#222" stroke-width="0.9"/><path d="M4.5 10 Q9 10.5 13.5 10 Q13 15 9 15 Q5 15 4.5 10 Z" fill="#222"/><path d="M6 13.5 Q9 15.5 12 13.5 Q9 12.5 6 13.5 Z" fill="#e04040"/></svg><svg class="a" style="left:391px;top:595px" width="18" height="18" viewBox="0 0 18 18"><circle cx="9" cy="9" r="8.3" fill="url(#smg)" stroke="#b88a00" stroke-width="0.8"/><ellipse cx="6.5" cy="6.5" rx="0.9" ry="1.4" fill="#222"/><ellipse cx="11.5" cy="6.5" rx="0.9" ry="1.4" fill="#222"/><path d="M4.5 10 Q9 10.5 13.5 10 Q13 15 9 15 Q5 15 4.5 10 Z" fill="#222"/><path d="M6 13.5 Q9 15.5 12 13.5 Q9 12.5 6 13.5 Z" fill="#e04040"/></svg><svg class="a" style="left:415px;top:595px" width="18" height="18" viewBox="0 0 18 18"><circle cx="9" cy="9" r="8.3" fill="url(#smg)" stroke="#b88a00" stroke-width="0.8"/><ellipse cx="6.5" cy="7" rx="0.9" ry="1.3" fill="#222"/><path d="M10.5 7 H13" stroke="#222" stroke-width="0.9"/><path d="M5 11 Q9 14.5 13 11" fill="none" stroke="#333" stroke-width="0.9"/></svg>
  <!-- textarea -->
  <div class="a" style="left:284px;top:668px;width:998px;height:110px;border:1px solid #c8c8c8;background:#fff"></div>
  <div class="a ta" style="top:676px">which package name should I install on my ubuntu to solve these problems below:</div>
  <div class="a ta" style="top:696px">qmake-qt5, <span class="sp">libgl</span>.so, <span class="sp">libgl</span>.so.1, libgtkglex-x11-1.0.so, libgdkglext-x11-1.0.so</div>
  <div class="a ta" style="top:716px;letter-spacing:-0.07px">I think I need to install these packages on my <span class="sp">ubuntu</span> in system libraries status are with defect</div>
  <!-- page scrollbar -->
  <div class="a" style="left:1349px;top:95px;width:4px;height:673px;background:linear-gradient(90deg,#e6e6e6,#d4d4d4)"></div>
  <div class="a" style="left:1353px;top:96px;width:14px;height:680px;border:1px solid #b4b0ac;border-radius:7px;background:#dddbd8"></div>
  <div class="a" style="left:1354px;top:97px;width:12px;height:12px;border-radius:6px 6px 0 0;background:#f6f6f6"></div>
  <svg class="a" style="left:1356px;top:100px" width="8" height="5"><path d="M0 5 L4 0.5 L8 5 Z" fill="#8a8a8a"/></svg>
  <div class="a" style="left:1353px;top:108px;width:14px;height:213px;border:1px solid #a8a4a0;border-radius:7px;background:linear-gradient(90deg,#ececec,#fafafa 50%,#ececec)"></div>
  <div class="a" style="left:1357px;top:210px;width:5px;height:1px;background:#aaa"></div>
  <div class="a" style="left:1357px;top:212px;width:5px;height:1px;background:#aaa"></div>
  <div class="a" style="left:1357px;top:214px;width:5px;height:1px;background:#aaa"></div>
  <div class="a" style="left:1353px;top:753px;width:14px;height:20px;border:1px solid #b4b0ac;border-radius:7px 7px 0 0;background:#f6f6f6"></div>
  <svg class="a" style="left:1356px;top:759px" width="8" height="5"><path d="M0 0 L8 0 L4 4.5 Z" fill="#555"/></svg>
</div>
<div id="dlg">
<div class="a" style="left:425px;top:106px;width:515px;height:583px;border-radius:6px 6px 0 0;box-shadow:0 6px 28px 6px rgba(0,0,0,0.55)"></div>
<div class="a" style="left:425px;top:106px;width:515px;height:29px;border-radius:6px 6px 0 0;background:linear-gradient(#5c5a54,#45443f 60%,#3f3e3a)"></div>
<div class="a wbtn" style="left:433px;top:113px;background:radial-gradient(circle at 50% 40%,#f88a5a,#e05a28 70%,#c8481c);border-color:#8a3a1a"></div>
<svg class="a" style="left:436px;top:116px" width="10" height="10"><path d="M2 2 L8 8 M8 2 L2 8" stroke="#3a2a20" stroke-width="1.2"/></svg>
<div class="a wbtn" style="left:452px;top:113px;background:radial-gradient(circle at 50% 40%,#8a8884,#6a6864 70%,#5a5854);border-color:#33322e"></div>
<div class="a" style="left:456px;top:120px;width:8px;height:1px;background:#3a3936"></div>
<div class="a wbtn" style="left:471px;top:113px;background:radial-gradient(circle at 50% 40%,#8a8884,#6a6864 70%,#5a5854);border-color:#33322e"></div>
<div class="a" style="left:475px;top:117px;width:8px;height:7px;border:1px solid #3a3936"></div>
<div class="a" style="left:498px;top:113px;font-size:14.85px;font-weight:bold;color:#dfdbd2;white-space:nowrap">Host Libraries Info</div>
<div class="a" style="left:425px;top:134px;width:515px;height:25px;background:#d6d2cc;border-top:1px solid #f4f2ee;border-bottom:1px solid #4a4a48"></div>
<svg class="a" style="left:429px;top:139px" width="15" height="15" viewBox="0 0 15 15"><circle cx="7.5" cy="7.5" r="7" fill="#c81818" stroke="#7a0a0a" stroke-width="0.8"/><circle cx="7.5" cy="6" r="5" fill="#e84040" opacity="0.5"/><path d="M4.8 4.8 L10.2 10.2 M10.2 4.8 L4.8 10.2" stroke="#fff" stroke-width="2.2"/></svg>
<div class="a" style="left:451px;top:138px;width:1px;height:18px;background:#444"></div>
<svg class="a" style="left:457px;top:139px" width="16" height="15" viewBox="0 0 16 15"><path d="M2.5 8 A5.5 5.5 0 0 1 12 3.5" fill="none" stroke="#3aa83a" stroke-width="2.4"/><path d="M13.5 7 A5.5 5.5 0 0 1 4 11.5" fill="none" stroke="#3aa83a" stroke-width="2.4"/><path d="M10 1 L14.5 2 L13 6 Z M6 14 L1.5 13 L3 9 Z" fill="#3aa83a"/></svg>
<div class="a" style="left:479px;top:138px;width:1px;height:18px;background:#444"></div>
<svg class="a" style="left:484px;top:138px" width="17" height="17" viewBox="0 0 17 17"><path d="M5 2 H12 L15 5 V15 H5 Z" fill="#f4f4f4" stroke="#7a8aa0" stroke-width="0.8"/><circle cx="4.5" cy="4.5" r="3.5" fill="#d040d0"/><path d="M8 10 H11 L12 11 H16 V16 H8 Z" fill="#e8d040" stroke="#444" stroke-width="0.8"/></svg>
<svg class="a" style="left:508px;top:139px" width="16" height="16" viewBox="0 0 16 16"><path d="M7 1 L11.5 6 H2.5 Z" transform="translate(3,0)" fill="#111"/><path d="M1 7 H5 V10 H1 Z M7 9 H13 V12 H7 Z M7 13 H13 V16 H7 Z M3 10 V14.5 H7 M3 10.5 H7" fill="none" stroke="#1a5ad0" stroke-width="1.2"/></svg>
<div class="a" style="left:425px;top:159px;width:499px;height:514px;background:#fff;overflow:hidden">
<svg class="a" style="left:0;top:0" width="499" height="514" shape-rendering="crispEdges"><defs><radialGradient id="gg" cx="0.45" cy="0.3" r="0.75"><stop offset="0" stop-color="#d4dde8"/><stop offset="0.55" stop-color="#8c9cb4"/><stop offset="1" stop-color="#56698a"/></radialGradient></defs><path d="M7.5 15 V514" fill="none" stroke="#111" stroke-width="1" stroke-dasharray="1 1"/><path d="M12 10.5 H16 M22.5 20 V28 M23 28.5 H30 M12 46.5 H16 M22.5 56 V64 M23 64.5 H30 M12 82.5 H16 M22.5 92 V100 M23 100.5 H30 M12 118.5 H16 M22.5 128 V136 M23 136.5 H30 M8 154.5 H16 M12 172.5 H16 M22.5 182 V190 M23 190.5 H30 M12 208.5 H16 M22.5 218 V226 M23 226.5 H30 M12 244.5 H16 M22.5 254 V262 M23 262.5 H30 M12 280.5 H16 M22.5 290 V298 M23 298.5 H30 M12 316.5 H16 M22.5 326 V334 M23 334.5 H30 M12 352.5 H16 M22.5 362 V370 M23 370.5 H30 M12 388.5 H16 M22.5 398 V406 M23 406.5 H30 M12 424.5 H16 M22.5 434 V442 M23 442.5 H30 M12 460.5 H16 M22.5 470 V478 M23 478.5 H30 M12 496.5 H16 M22.5 506 V514 M23 514.5 H30" fill="none" stroke="#111" stroke-width="1" stroke-dasharray="1 1"/></svg><div class="a exb" style="left:3px;top:6px"></div><svg class="a" style="left:17px;top:4px" width="13" height="13" viewBox="0 0 13 13"><path d="M11.38 6.95 L12.74 7.91 L11.91 9.91 L10.27 9.63 L9.63 10.27 L9.91 11.91 L7.91 12.74 L6.95 11.38 L6.05 11.38 L5.09 12.74 L3.09 11.91 L3.37 10.27 L2.73 9.63 L1.09 9.91 L0.26 7.91 L1.62 6.95 L1.62 6.05 L0.26 5.09 L1.09 3.09 L2.73 3.37 L3.37 2.73 L3.09 1.09 L5.09 0.26 L6.05 1.62 L6.95 1.62 L7.91 0.26 L9.91 1.09 L9.63 2.73 L10.27 3.37 L11.91 3.09 L12.74 5.09 L11.38 6.05 Z" fill="url(#gg)" stroke="#6a7a90" stroke-width="0.5"/><circle cx="6.5" cy="6.5" r="2" fill="#e8eef6" stroke="#5a6a88" stroke-width="0.5"/></svg><div class="a tt" style="left:36px;top:-1px">make</div><div class="a ball" style="left:34px;top:24px"></div><div class="a tt" style="left:52px;top:17px">/usr/bin/make</div><div class="a exb" style="left:3px;top:42px"></div><svg class="a" style="left:17px;top:40px" width="13" height="13" viewBox="0 0 13 13"><path d="M11.38 6.95 L12.74 7.91 L11.91 9.91 L10.27 9.63 L9.63 10.27 L9.91 11.91 L7.91 12.74 L6.95 11.38 L6.05 11.38 L5.09 12.74 L3.09 11.91 L3.37 10.27 L2.73 9.63 L1.09 9.91 L0.26 7.91 L1.62 6.95 L1.62 6.05 L0.26 5.09 L1.09 3.09 L2.73 3.37 L3.37 2.73 L3.09 1.09 L5.09 0.26 L6.05 1.62 L6.95 1.62 L7.91 0.26 L9.91 1.09 L9.63 2.73 L10.27 3.37 L11.91 3.09 L12.74 5.09 L11.38 6.05 Z" fill="url(#gg)" stroke="#6a7a90" stroke-width="0.5"/><circle cx="6.5" cy="6.5" r="2" fill="#e8eef6" stroke="#5a6a88" stroke-width="0.5"/></svg><div class="a tt" style="left:36px;top:35px">qmake-qt4</div><div class="a ball" style="left:34px;top:60px"></div><div class="a tt" style="left:52px;top:53px">/usr/bin/qmake-qt4</div><div class="a exb" style="left:3px;top:78px"></div><svg class="a" style="left:17px;top:76px" width="13" height="13" viewBox="0 0 13 13"><path d="M11.38 6.95 L12.74 7.91 L11.91 9.91 L10.27 9.63 L9.63 10.27 L9.91 11.91 L7.91 12.74 L6.95 11.38 L6.05 11.38 L5.09 12.74 L3.09 11.91 L3.37 10.27 L2.73 9.63 L1.09 9.91 L0.26 7.91 L1.62 6.95 L1.62 6.05 L0.26 5.09 L1.09 3.09 L2.73 3.37 L3.37 2.73 L3.09 1.09 L5.09 0.26 L6.05 1.62 L6.95 1.62 L7.91 0.26 L9.91 1.09 L9.63 2.73 L10.27 3.37 L11.91 3.09 L12.74 5.09 L11.38 6.05 Z" fill="url(#gg)" stroke="#6a7a90" stroke-width="0.5"/><circle cx="6.5" cy="6.5" r="2" fill="#e8eef6" stroke="#5a6a88" stroke-width="0.5"/></svg><div class="a tt" style="left:36px;top:71px">libQt4Pas.so.5</div><div class="a ball" style="left:34px;top:96px"></div><div class="a tt" style="left:52px;top:89px">/usr/lib/x86_64-linux-gnu/libQt4Pas.so.5</div><div class="a exb" style="left:3px;top:114px"></div><svg class="a" style="left:17px;top:112px" width="13" height="13" viewBox="0 0 13 13"><path d="M11.38 6.95 L12.74 7.91 L11.91 9.91 L10.27 9.63 L9.63 10.27 L9.91 11.91 L7.91 12.74 L6.95 11.38 L6.05 11.38 L5.09 12.74 L3.09 11.91 L3.37 10.27 L2.73 9.63 L1.09 9.91 L0.26 7.91 L1.62 6.95 L1.62 6.05 L0.26 5.09 L1.09 3.09 L2.73 3.37 L3.37 2.73 L3.09 1.09 L5.09 0.26 L6.05 1.62 L6.95 1.62 L7.91 0.26 L9.91 1.09 L9.63 2.73 L10.27 3.37 L11.91 3.09 L12.74 5.09 L11.38 6.05 Z" fill="url(#gg)" stroke="#6a7a90" stroke-width="0.5"/><circle cx="6.5" cy="6.5" r="2" fill="#e8eef6" stroke="#5a6a88" stroke-width="0.5"/></svg><div class="a tt" style="left:36px;top:107px">libQtWebKit.so.4</div><div class="a ball" style="left:34px;top:132px"></div><div class="a tt" style="left:52px;top:125px">/usr/lib/x86_64-linux-gnu/libQtWebKit.so.4</div><svg class="a" style="left:16px;top:145px" width="17" height="17" viewBox="0 0 17 17"><path d="M9.98 6.37 L11.07 7.15 L10.40 8.77 L9.08 8.55 L8.55 9.08 L8.77 10.40 L7.15 11.07 L6.37 9.98 L5.63 9.98 L4.85 11.07 L3.23 10.40 L3.45 9.08 L2.92 8.55 L1.60 8.77 L0.93 7.15 L2.02 6.37 L2.02 5.63 L0.93 4.85 L1.60 3.23 L2.92 3.45 L3.45 2.92 L3.23 1.60 L4.85 0.93 L5.63 2.02 L6.37 2.02 L7.15 0.93 L8.77 1.60 L8.55 2.92 L9.08 3.45 L10.40 3.23 L11.07 4.85 L9.98 5.63 Z" fill="#e4e4e4" stroke="#aaa" stroke-width="0.6"/><circle cx="6" cy="6" r="1.8" fill="#fff" stroke="#bbb" stroke-width="0.6"/><path d="M15.28 11.82 L16.29 12.52 L15.69 13.95 L14.49 13.74 L14.04 14.19 L14.25 15.39 L12.82 15.99 L12.12 14.98 L11.48 14.98 L10.78 15.99 L9.35 15.39 L9.56 14.19 L9.11 13.74 L7.91 13.95 L7.31 12.52 L8.32 11.82 L8.32 11.18 L7.31 10.48 L7.91 9.05 L9.11 9.26 L9.56 8.81 L9.35 7.61 L10.78 7.01 L11.48 8.02 L12.12 8.02 L12.82 7.01 L14.25 7.61 L14.04 8.81 L14.49 9.26 L15.69 9.05 L16.29 10.48 L15.28 11.18 Z" fill="#dedede" stroke="#9a9a9a" stroke-width="0.6"/><circle cx="11.8" cy="11.5" r="1.6" fill="#fff" stroke="#aaa" stroke-width="0.6"/><path d="M1.8 9.5 L7 14.7 M7 9.5 L1.8 14.7" stroke="#e01a10" stroke-width="2.8" stroke-linecap="round"/></svg><div class="a" style="left:33px;top:145px;width:72px;height:18px;background:#000080"></div><div class="a tt" style="left:36px;top:143px;color:#fff">qmake-qt5</div><div class="a exb" style="left:3px;top:168px"></div><svg class="a" style="left:17px;top:166px" width="13" height="13" viewBox="0 0 13 13"><path d="M11.38 6.95 L12.74 7.91 L11.91 9.91 L10.27 9.63 L9.63 10.27 L9.91 11.91 L7.91 12.74 L6.95 11.38 L6.05 11.38 L5.09 12.74 L3.09 11.91 L3.37 10.27 L2.73 9.63 L1.09 9.91 L0.26 7.91 L1.62 6.95 L1.62 6.05 L0.26 5.09 L1.09 3.09 L2.73 3.37 L3.37 2.73 L3.09 1.09 L5.09 0.26 L6.05 1.62 L6.95 1.62 L7.91 0.26 L9.91 1.09 L9.63 2.73 L10.27 3.37 L11.91 3.09 L12.74 5.09 L11.38 6.05 Z" fill="url(#gg)" stroke="#6a7a90" stroke-width="0.5"/><circle cx="6.5" cy="6.5" r="2" fill="#e8eef6" stroke="#5a6a88" stroke-width="0.5"/></svg><div class="a tt" style="left:36px;top:161px">libQt5Pas.so.1</div><div class="a ball" style="left:34px;top:186px"></div><div class="a tt" style="left:52px;top:179px">/usr/lib/x86_64-linux-gnu/libQt5Pas.so.1</div><div class="a exb" style="left:3px;top:204px"></div><svg class="a" style="left:17px;top:202px" width="13" height="13" viewBox="0 0 13 13"><path d="M11.38 6.95 L12.74 7.91 L11.91 9.91 L10.27 9.63 L9.63 10.27 L9.91 11.91 L7.91 12.74 L6.95 11.38 L6.05 11.38 L5.09 12.74 L3.09 11.91 L3.37 10.27 L2.73 9.63 L1.09 9.91 L0.26 7.91 L1.62 6.95 L1.62 6.05 L0.26 5.09 L1.09 3.09 L2.73 3.37 L3.37 2.73 L3.09 1.09 L5.09 0.26 L6.05 1.62 L6.95 1.62 L7.91 0.26 L9.91 1.09 L9.63 2.73 L10.27 3.37 L11.91 3.09 L12.74 5.09 L11.38 6.05 Z" fill="url(#gg)" stroke="#6a7a90" stroke-width="0.5"/><circle cx="6.5" cy="6.5" r="2" fill="#e8eef6" stroke="#5a6a88" stroke-width="0.5"/></svg><div class="a tt" style="left:36px;top:197px">xterm</div><div class="a ball" style="left:34px;top:222px"></div><div class="a tt" style="left:52px;top:215px">/usr/bin/xterm</div><div class="a exb" style="left:3px;top:240px"></div><svg class="a" style="left:17px;top:238px" width="13" height="13" viewBox="0 0 13 13"><path d="M11.38 6.95 L12.74 7.91 L11.91 9.91 L10.27 9.63 L9.63 10.27 L9.91 11.91 L7.91 12.74 L6.95 11.38 L6.05 11.38 L5.09 12.74 L3.09 11.91 L3.37 10.27 L2.73 9.63 L1.09 9.91 L0.26 7.91 L1.62 6.95 L1.62 6.05 L0.26 5.09 L1.09 3.09 L2.73 3.37 L3.37 2.73 L3.09 1.09 L5.09 0.26 L6.05 1.62 L6.95 1.62 L7.91 0.26 L9.91 1.09 L9.63 2.73 L10.27 3.37 L11.91 3.09 L12.74 5.09 L11.38 6.05 Z" fill="url(#gg)" stroke="#6a7a90" stroke-width="0.5"/><circle cx="6.5" cy="6.5" r="2" fill="#e8eef6" stroke="#5a6a88" stroke-width="0.5"/></svg><div class="a tt" style="left:36px;top:233px">libc.so</div><div class="a ball" style="left:34px;top:258px"></div><div class="a tt" style="left:52px;top:251px">/usr/lib/x86_64-linux-gnu/libc.so</div><div class="a exb" style="left:3px;top:276px"></div><svg class="a" style="left:17px;top:274px" width="13" height="13" viewBox="0 0 13 13"><path d="M11.38 6.95 L12.74 7.91 L11.91 9.91 L10.27 9.63 L9.63 10.27 L9.91 11.91 L7.91 12.74 L6.95 11.38 L6.05 11.38 L5.09 12.74 L3.09 11.91 L3.37 10.27 L2.73 9.63 L1.09 9.91 L0.26 7.91 L1.62 6.95 L1.62 6.05 L0.26 5.09 L1.09 3.09 L2.73 3.37 L3.37 2.73 L3.09 1.09 L5.09 0.26 L6.05 1.62 L6.95 1.62 L7.91 0.26 L9.91 1.09 L9.63 2.73 L10.27 3.37 L11.91 3.09 L12.74 5.09 L11.38 6.05 Z" fill="url(#gg)" stroke="#6a7a90" stroke-width="0.5"/><circle cx="6.5" cy="6.5" r="2" fill="#e8eef6" stroke="#5a6a88" stroke-width="0.5"/></svg><div class="a tt" style="left:36px;top:269px">libdl.so</div><div class="a ball" style="left:34px;top:294px"></div><div class="a tt" style="left:52px;top:287px">/usr/lib/x86_64-linux-gnu/libdl.so</div><div class="a exb" style="left:3px;top:312px"></div><svg class="a" style="left:17px;top:310px" width="13" height="13" viewBox="0 0 13 13"><path d="M11.38 6.95 L12.74 7.91 L11.91 9.91 L10.27 9.63 L9.63 10.27 L9.91 11.91 L7.91 12.74 L6.95 11.38 L6.05 11.38 L5.09 12.74 L3.09 11.91 L3.37 10.27 L2.73 9.63 L1.09 9.91 L0.26 7.91 L1.62 6.95 L1.62 6.05 L0.26 5.09 L1.09 3.09 L2.73 3.37 L3.37 2.73 L3.09 1.09 L5.09 0.26 L6.05 1.62 L6.95 1.62 L7.91 0.26 L9.91 1.09 L9.63 2.73 L10.27 3.37 L11.91 3.09 L12.74 5.09 L11.38 6.05 Z" fill="url(#gg)" stroke="#6a7a90" stroke-width="0.5"/><circle cx="6.5" cy="6.5" r="2" fill="#e8eef6" stroke="#5a6a88" stroke-width="0.5"/></svg><div class="a tt" style="left:36px;top:305px">libpthread.so</div><div class="a ball" style="left:34px;top:330px"></div><div class="a tt" style="left:52px;top:323px">/usr/lib/x86_64-linux-gnu/libpthread.so</div><div class="a exb" style="left:3px;top:348px"></div><svg class="a" style="left:17px;top:346px" width="13" height="13" viewBox="0 0 13 13"><path d="M11.38 6.95 L12.74 7.91 L11.91 9.91 L10.27 9.63 L9.63 10.27 L9.91 11.91 L7.91 12.74 L6.95 11.38 L6.05 11.38 L5.09 12.74 L3.09 11.91 L3.37 10.27 L2.73 9.63 L1.09 9.91 L0.26 7.91 L1.62 6.95 L1.62 6.05 L0.26 5.09 L1.09 3.09 L2.73 3.37 L3.37 2.73 L3.09 1.09 L5.09 0.26 L6.05 1.62 L6.95 1.62 L7.91 0.26 L9.91 1.09 L9.63 2.73 L10.27 3.37 L11.91 3.09 L12.74 5.09 L11.38 6.05 Z" fill="url(#gg)" stroke="#6a7a90" stroke-width="0.5"/><circle cx="6.5" cy="6.5" r="2" fill="#e8eef6" stroke="#5a6a88" stroke-width="0.5"/></svg><div class="a tt" style="left:36px;top:341px">libatk-1.0.so</div><div class="a ball" style="left:34px;top:366px"></div><div class="a tt" style="left:52px;top:359px">/usr/lib/x86_64-linux-gnu/libatk-1.0.so</div><div class="a exb" style="left:3px;top:384px"></div><svg class="a" style="left:17px;top:382px" width="13" height="13" viewBox="0 0 13 13"><path d="M11.38 6.95 L12.74 7.91 L11.91 9.91 L10.27 9.63 L9.63 10.27 L9.91 11.91 L7.91 12.74 L6.95 11.38 L6.05 11.38 L5.09 12.74 L3.09 11.91 L3.37 10.27 L2.73 9.63 L1.09 9.91 L0.26 7.91 L1.62 6.95 L1.62 6.05 L0.26 5.09 L1.09 3.09 L2.73 3.37 L3.37 2.73 L3.09 1.09 L5.09 0.26 L6.05 1.62 L6.95 1.62 L7.91 0.26 L9.91 1.09 L9.63 2.73 L10.27 3.37 L11.91 3.09 L12.74 5.09 L11.38 6.05 Z" fill="url(#gg)" stroke="#6a7a90" stroke-width="0.5"/><circle cx="6.5" cy="6.5" r="2" fill="#e8eef6" stroke="#5a6a88" stroke-width="0.5"/></svg><div class="a tt" style="left:36px;top:377px">libX11.so</div><div class="a ball" style="left:34px;top:402px"></div><div class="a tt" style="left:52px;top:395px">/usr/lib/x86_64-linux-gnu/libX11.so</div><div class="a exb" style="left:3px;top:420px"></div><svg class="a" style="left:17px;top:418px" width="13" height="13" viewBox="0 0 13 13"><path d="M11.38 6.95 L12.74 7.91 L11.91 9.91 L10.27 9.63 L9.63 10.27 L9.91 11.91 L7.91 12.74 L6.95 11.38 L6.05 11.38 L5.09 12.74 L3.09 11.91 L3.37 10.27 L2.73 9.63 L1.09 9.91 L0.26 7.91 L1.62 6.95 L1.62 6.05 L0.26 5.09 L1.09 3.09 L2.73 3.37 L3.37 2.73 L3.09 1.09 L5.09 0.26 L6.05 1.62 L6.95 1.62 L7.91 0.26 L9.91 1.09 L9.63 2.73 L10.27 3.37 L11.91 3.09 L12.74 5.09 L11.38 6.05 Z" fill="url(#gg)" stroke="#6a7a90" stroke-width="0.5"/><circle cx="6.5" cy="6.5" r="2" fill="#e8eef6" stroke="#5a6a88" stroke-width="0.5"/></svg><div class="a tt" style="left:36px;top:413px">libXtst.so</div><div class="a ball" style="left:34px;top:438px"></div><div class="a tt" style="left:52px;top:431px">/usr/lib/x86_64-linux-gnu/libXtst.so</div><div class="a exb" style="left:3px;top:456px"></div><svg class="a" style="left:17px;top:454px" width="13" height="13" viewBox="0 0 13 13"><path d="M11.38 6.95 L12.74 7.91 L11.91 9.91 L10.27 9.63 L9.63 10.27 L9.91 11.91 L7.91 12.74 L6.95 11.38 L6.05 11.38 L5.09 12.74 L3.09 11.91 L3.37 10.27 L2.73 9.63 L1.09 9.91 L0.26 7.91 L1.62 6.95 L1.62 6.05 L0.26 5.09 L1.09 3.09 L2.73 3.37 L3.37 2.73 L3.09 1.09 L5.09 0.26 L6.05 1.62 L6.95 1.62 L7.91 0.26 L9.91 1.09 L9.63 2.73 L10.27 3.37 L11.91 3.09 L12.74 5.09 L11.38 6.05 Z" fill="url(#gg)" stroke="#6a7a90" stroke-width="0.5"/><circle cx="6.5" cy="6.5" r="2" fill="#e8eef6" stroke="#5a6a88" stroke-width="0.5"/></svg><div class="a tt" style="left:36px;top:449px">libXxf86vm.so</div><div class="a ball" style="left:34px;top:474px"></div><div class="a tt" style="left:52px;top:467px">/usr/lib/x86_64-linux-gnu/libXxf86vm.so</div><div class="a exb" style="left:3px;top:492px"></div><svg class="a" style="left:17px;top:490px" width="13" height="13" viewBox="0 0 13 13"><path d="M11.38 6.95 L12.74 7.91 L11.91 9.91 L10.27 9.63 L9.63 10.27 L9.91 11.91 L7.91 12.74 L6.95 11.38 L6.05 11.38 L5.09 12.74 L3.09 11.91 L3.37 10.27 L2.73 9.63 L1.09 9.91 L0.26 7.91 L1.62 6.95 L1.62 6.05 L0.26 5.09 L1.09 3.09 L2.73 3.37 L3.37 2.73 L3.09 1.09 L5.09 0.26 L6.05 1.62 L6.95 1.62 L7.91 0.26 L9.91 1.09 L9.63 2.73 L10.27 3.37 L11.91 3.09 L12.74 5.09 L11.38 6.05 Z" fill="url(#gg)" stroke="#6a7a90" stroke-width="0.5"/><circle cx="6.5" cy="6.5" r="2" fill="#e8eef6" stroke="#5a6a88" stroke-width="0.5"/></svg><div class="a tt" style="left:36px;top:485px">libGL.so</div><div class="a ball" style="left:34px;top:510px"></div><div class="a tt" style="left:52px;top:503px">/usr/lib/x86_64-linux-gnu/libGL.so</div>
</div>
<div class="a dith" style="left:924px;top:159px;width:16px;height:514px"></div>
<div class="a sbtn" style="left:924px;top:160px;width:16px;height:16px"></div>
<svg class="a" style="left:927px;top:165px" width="10" height="6"><path d="M0 6 L5 0 L10 6 Z" fill="#000"/></svg>
<div class="a sbtn" style="left:924px;top:176px;width:16px;height:217px"></div>
<div class="a sbtn" style="left:924px;top:657px;width:16px;height:16px"></div>
<svg class="a" style="left:927px;top:663px" width="10" height="6"><path d="M0 0 L10 0 L5 6 Z" fill="#000"/></svg>
<div class="a dith" style="left:425px;top:673px;width:499px;height:16px"></div>
<div class="a sbtn" style="left:425px;top:673px;width:16px;height:16px"></div>
<svg class="a" style="left:430px;top:676px" width="6" height="10"><path d="M6 0 L0 5 L6 10 Z" fill="#a0a0a8"/></svg>
<div class="a sbtn" style="left:908px;top:673px;width:16px;height:16px"></div>
<svg class="a" style="left:914px;top:676px" width="6" height="10"><path d="M0 0 L6 5 L0 10 Z" fill="#a0a0a8"/></svg>
<div class="a" style="left:924px;top:673px;width:16px;height:16px;background:#d6d2cc"></div>
</div>
</body></html>
